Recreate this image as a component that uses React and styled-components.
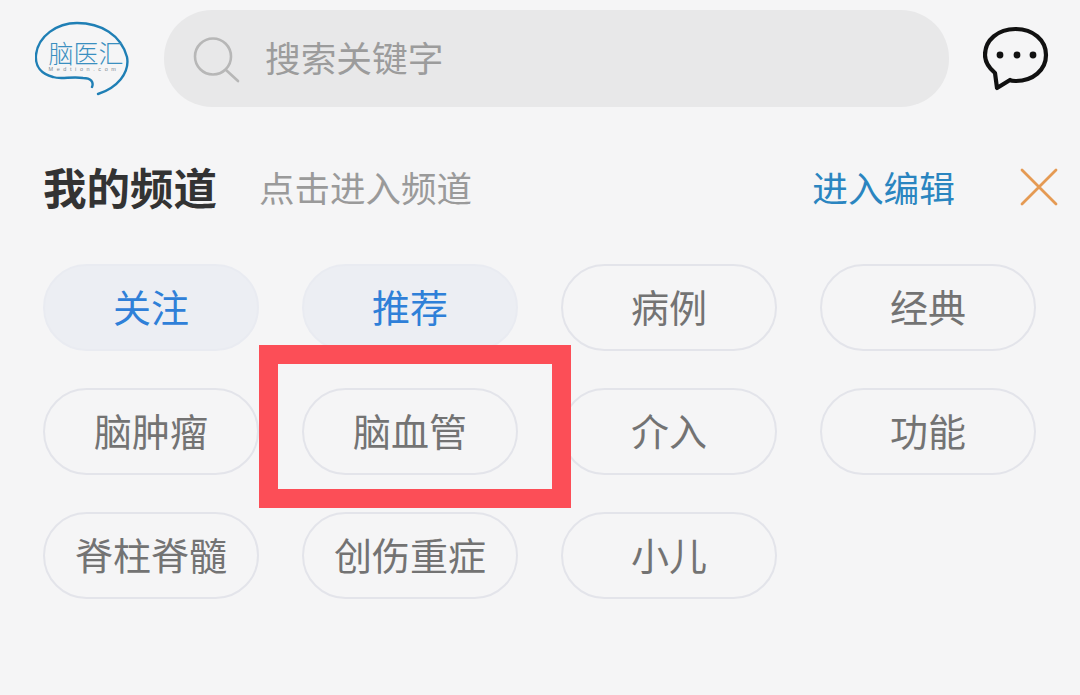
import React from "react";
import styled, { createGlobalStyle } from "styled-components";

const Global = createGlobalStyle`
  html, body { margin: 0; padding: 0; background: #f5f5f6; }
  body { font-family: "Noto Sans CJK SC", "Liberation Sans", sans-serif; }
`;
const Page = styled.div`
  position: relative; width: 1080px; height: 695px; overflow: hidden; background: #f5f5f6;
`;
const Header = styled.header`
  display: flex; align-items: center; height: 97px; padding: 10px 0 0 35px;
`;
const Logo = styled.svg`
  width: 95px; height: 76px; flex: none; margin-right: 34px;
`;
const Search = styled.div`
  display: flex; align-items: center; width: 785px; height: 97px; border-radius: 48px;
  background: #e8e8e9; padding-left: 29px; box-sizing: border-box;
`;
const SearchText = styled.span`
  margin-left: 24px; font-size: 35.7px; line-height: 1; color: #9c9c9c; margin-top: -3px;
`;
const Chat = styled.svg`
  width: 66px; height: 66px; flex: none; margin-left: 34px;
`;
const TitleRow = styled.div`
  display: flex; align-items: center; height: 60px; margin-top: 50px; padding-left: 43px;
`;
const Title = styled.h2`
  margin: 0; font-size: 43.5px; line-height: 60px; font-weight: 700; color: #333;
`;
const Sub = styled.span`
  margin-left: 42px; font-size: 35.5px; color: #9a9a9a; line-height: 60px;
`;
const Edit = styled.span`
  margin-left: auto; font-size: 35.7px; color: #2a85c0; line-height: 60px;
`;
const Close = styled.svg`
  width: 38px; height: 38px; margin: 0 22px 0 65px; flex: none;
`;
const Grid = styled.div`
  display: grid; grid-template-columns: repeat(4, 216px); column-gap: 43px; row-gap: 37px;
  margin-top: 47px; padding-left: 43px;
`;
const Chip = styled.div`
  display: flex; align-items: center; justify-content: center; height: 87px; box-sizing: border-box;
  border-radius: 44px; font-size: 38px; line-height: 1; white-space: nowrap; padding-bottom: 3px;
  border: 2px solid ${p => (p.$active ? "#e9ebf1" : "#e3e4ea")};
  background: ${p => (p.$active ? "#eceef3" : "transparent")};
  color: ${p => (p.$active ? "#2f80d8" : "#737373")};
`;
const Highlight = styled.div`
  position: absolute; left: 259px; top: 345px; width: 312px; height: 163px; box-sizing: border-box;
  border: 19px solid #fc4e57;
`;
const channels = [
  ["关注", true], ["推荐", true], ["病例"], ["经典"],
  ["脑肿瘤"], ["脑血管"], ["介入"], ["功能"],
  ["脊柱脊髓"], ["创伤重症"], ["小儿"],
];

export default function App() {
  return (
    <Page>
      <Global />
      <Header>
        <Logo viewBox="0 0 95 76">
          <path d="M57 66 C59 61 56 57 48 57 C36 55 26 59 18 56 C6 53 0 45 1 34 C3 15 22 2 42 2 C66 2 86 14 92 36 C95 52 82 67 63 73"
            fill="none" stroke="#1f7fb5" strokeWidth="2.4" strokeLinecap="round" />
          <text x="51" y="42" textAnchor="middle" fontSize="25" fill="#3a8fc0" fontFamily="'Noto Sans CJK SC', sans-serif" fontWeight="300">脑医汇</text>
          <text x="49" y="50" textAnchor="middle" fontSize="5.5" letterSpacing="3.6" fill="#7d8a92" fontFamily="'Liberation Sans', sans-serif">Medtion.com</text>
        </Logo>
        <Search>
          <svg width="48" height="48" viewBox="0 0 48 48" fill="none" stroke="#b7b7b7" strokeWidth="2.6" strokeLinecap="round">
            <circle cx="20" cy="21.5" r="18" />
            <path d="M33 35 L45 46" />
          </svg>
          <SearchText>搜索关键字</SearchText>
        </Search>
        <Chat viewBox="0 0 66 66" fill="none">
          <path d="M12 47 C6 42 2 36 2 29 C2 14 15 3 32.5 3 C50 3 63 14 63 29 C63 44 50 55 32.5 55 C30.5 55 28.5 55 27 54 L14 62 Z"
            stroke="#111" strokeWidth="4.2" strokeLinejoin="round" />
          <circle cx="17" cy="29" r="3.4" fill="#111" />
          <circle cx="34" cy="29" r="3.4" fill="#111" />
          <circle cx="50" cy="29" r="3.4" fill="#111" />
        </Chat>
      </Header>
      <TitleRow>
        <Title>我的频道</Title>
        <Sub>点击进入频道</Sub>
        <Edit>进入编辑</Edit>
        <Close viewBox="0 0 38 38" stroke="#e59a53" strokeWidth="2.8" strokeLinecap="round">
          <path d="M2 2 L36 36 M36 2 L2 36" />
        </Close>
      </TitleRow>
      <Grid>
        {channels.map(([name, active]) => (
          <Chip key={name} $active={active}>{name}</Chip>
        ))}
      </Grid>
      <Highlight />
    </Page>
  );
}
